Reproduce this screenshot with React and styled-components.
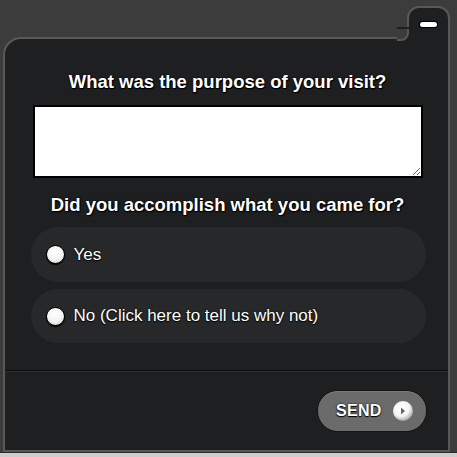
import React from "react"
import styled, { createGlobalStyle } from "styled-components"

const GlobalStyle = createGlobalStyle`
  html, body {
    margin: 0;
    padding: 0;
    background: #3c3c3c;
  }
  body {
    font-family: "Liberation Sans", Arial, sans-serif;
  }
`

const Page = styled.div`
  width: 457px;
  height: 457px;
  display: flex;
  flex-direction: column;
  background: #3c3c3c;
  overflow: hidden;
`

const Widget = styled.div`
  display: flex;
  flex-direction: column;
  padding: 6px 7px 0 3px;
`

const TabRow = styled.div`
  display: flex;
  justify-content: flex-end;
  height: 31px;
`

const Tab = styled.div`
  position: relative;
  z-index: 2;
  box-sizing: border-box;
  width: 43px;
  height: 33px;
  margin-bottom: -2px;
  background: #1e1f20;
  border: 2px solid #585858;
  border-bottom: none;
  border-radius: 12px 12px 0 0;
  display: flex;
  justify-content: center;
  padding-top: 14px;

  &::before {
    content: "";
    position: absolute;
    left: -12px;
    bottom: 0;
    width: 12px;
    height: 12px;
    background: #1e1f20;
  }
  &::after {
    content: "";
    position: absolute;
    left: -12px;
    bottom: -2px;
    box-sizing: border-box;
    width: 12px;
    height: 12px;
    background: #3c3c3c;
    border-right: 2px solid #585858;
    border-bottom: 2px solid #585858;
    border-radius: 0 0 8px 0;
  }
`

const MinimizeBar = styled.span`
  display: block;
  width: 17px;
  height: 5px;
  border-radius: 3px;
  background: #fff;
  box-shadow: 0 0 0 1px #000;
`

const Panel = styled.div`
  position: relative;
  z-index: 1;
  box-sizing: border-box;
  height: 415px;
  background: #1e1f20;
  border: 2px solid #585858;
  border-radius: 18px 0 0 0;
  display: flex;
  flex-direction: column;
`

const Body = styled.div`
  display: flex;
  flex-direction: column;
  align-items: center;
  padding: 32px 0 0 2px;
`

const Question = styled.h2`
  margin: 0;
  font-size: 18.5px;
  line-height: 22px;
  font-weight: 700;
  color: #fff;
  text-shadow: 0 0 2px #000, 0 1px 1px #000, 1px 1px 1px #000;
  margin-top: ${({ $gap }) => $gap || 0}px;
`

const TextBox = styled.textarea`
  box-sizing: border-box;
  width: 390px;
  height: 73px;
  margin-top: 12px;
  border: 2px solid #000;
  border-radius: 0;
  background: #fff;
  outline: none;
  padding: 4px;
  font-family: "Liberation Sans", Arial, sans-serif;
  resize: vertical;
`

const Options = styled.div`
  display: flex;
  flex-direction: column;
  gap: 7px;
  margin-top: 11px;
  width: 395px;
  margin-left: 1px;
`

const Option = styled.label`
  display: flex;
  align-items: center;
  gap: 9px;
  height: ${({ $h }) => $h}px;
  padding-left: 15px;
  background: #272829;
  border-radius: 28px;
  color: #fff;
  font-size: 17px;
  text-shadow: 0 0 2px #000, 0 1px 1px #000;
  cursor: pointer;
`

const Radio = styled.span`
  box-sizing: border-box;
  width: 19px;
  height: 19px;
  border-radius: 50%;
  background: radial-gradient(circle at 45% 35%, #ffffff 0%, #f2f2f2 55%, #c8c8c8 100%);
  border: 1px solid #000;
  box-shadow: 0 1px 1px #000;
`

const Divider = styled.hr`
  width: 100%;
  margin: 27px 0 0;
  border: none;
  height: 1px;
  background: #0c0c0c;
  box-shadow: 0 1px 0 #2f3031;
`

const Footer = styled.div`
  display: flex;
  justify-content: flex-end;
  padding: 20px 22px 0 0;
`

const SendButton = styled.button`
  box-sizing: border-box;
  width: 108px;
  height: 40px;
  border: none;
  border-radius: 20px;
  background: #6b6b6b;
  box-shadow: 0 0 0 1px #141414, inset 0 1px 0 #7a7a7a;
  display: flex;
  align-items: center;
  padding: 0 0 0 18px;
  gap: 10px;
  color: #fff;
  font-family: "Liberation Sans", Arial, sans-serif;
  font-weight: 700;
  font-size: 16px;
  letter-spacing: 0.3px;
  text-shadow: 0 0 2px #000, 0 1px 1px #000;
  cursor: pointer;
`

const PlayIcon = () => (
  <svg width="22" height="22" viewBox="0 0 22 22">
    <defs>
      <radialGradient id="pg" cx="40%" cy="35%" r="70%">
        <stop offset="0%" stopColor="#ffffff" />
        <stop offset="60%" stopColor="#f4f4f4" />
        <stop offset="100%" stopColor="#9a9a9a" />
      </radialGradient>
    </defs>
    <circle cx="11" cy="11" r="10" fill="url(#pg)" />
    <path d="M9 7.5 L13 11 L9 14.5 Z" fill="#666" />
  </svg>
)

const BottomStrip = styled.div`
  flex: 1;
  border-top: 1px solid #2a2a2a;
  background: #cdcdcd;
`

export default function App() {
  return (
    <Page>
      <GlobalStyle />
      <Widget>
        <TabRow>
          <Tab>
            <MinimizeBar />
          </Tab>
        </TabRow>
        <Panel>
          <Body>
            <Question>What was the purpose of your visit?</Question>
            <TextBox />
            <Question $gap={16}>Did you accomplish what you came for?</Question>
            <Options>
              <Option $h={55}>
                <Radio />
                Yes
              </Option>
              <Option $h={54}>
                <Radio />
                No (Click here to tell us why not)
              </Option>
            </Options>
          </Body>
          <Divider />
          <Footer>
            <SendButton>
              SEND
              <PlayIcon />
            </SendButton>
          </Footer>
        </Panel>
      </Widget>
      <BottomStrip />
    </Page>
  )
}
